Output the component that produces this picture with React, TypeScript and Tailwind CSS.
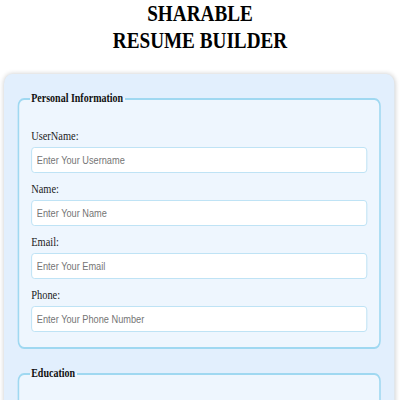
import React from "react";

const fields = [
  { label: "UserName:", placeholder: "Enter Your Username" },
  { label: "Name:", placeholder: "Enter Your Name" },
  { label: "Email:", placeholder: "Enter Your Email" },
  { label: "Phone:", placeholder: "Enter Your Phone Number" },
];

function Field({ label, placeholder, last }: { label: string; placeholder: string; last?: boolean }) {
  return (
    <div className={last ? "" : "mb-[8px]"}>
      <label className="block text-[13px] leading-[16px] mb-[3px] text-[#1a1a1a]">{label}</label>
      <input
        type="text"
        placeholder={placeholder}
        className="block w-full h-[26px] bg-white border border-[#b8e0f4] rounded-[4px] px-[6px] text-[11.5px] placeholder:text-[#757575] outline-none"
        style={{ fontFamily: '"Liberation Sans", Arial, sans-serif' }}
      />
    </div>
  );
}

function Section({
  title,
  items,
  className,
}: {
  title: string;
  items: typeof fields;
  className?: string;
}) {
  return (
    <fieldset
      className={`border-2 border-[#9fd8f1] rounded-[8px] bg-[#eef6fe] px-[15px] pt-[22px] pb-[15px] ${className ?? ""}`}
    >
      <legend className="-ml-0.5 px-0.5 text-[12.5px] leading-[15px] font-bold text-[#111]">{title}</legend>
      {items.map((f, i) => (
        <Field key={f.label} label={f.label} placeholder={f.placeholder} last={i === items.length - 1} />
      ))}
    </fieldset>
  );
}

export default function App() {
  return (
    <div className="w-[400px] h-[400px] overflow-hidden bg-white">
      <div
        className="w-[500px] origin-top-left scale-x-[0.8]"
        style={{ fontFamily: '"Liberation Serif", "Times New Roman", serif' }}
      >
        <h1 className="text-center text-[24px] leading-[27px] font-bold text-black mb-[20px]">
          SHARABLE
          <br />
          RESUME BUILDER
        </h1>
        <div className="ml-[5px] w-[488px] rounded-[10px] bg-[#e2effd] p-[17px] shadow-[0_0_6px_rgba(0,0,0,0.22)]">
          <Section title="Personal Information" items={fields} />
          <Section title="Education" items={[]} className="mt-[17px] min-h-[120px]" />
        </div>
      </div>
    </div>
  );
}
